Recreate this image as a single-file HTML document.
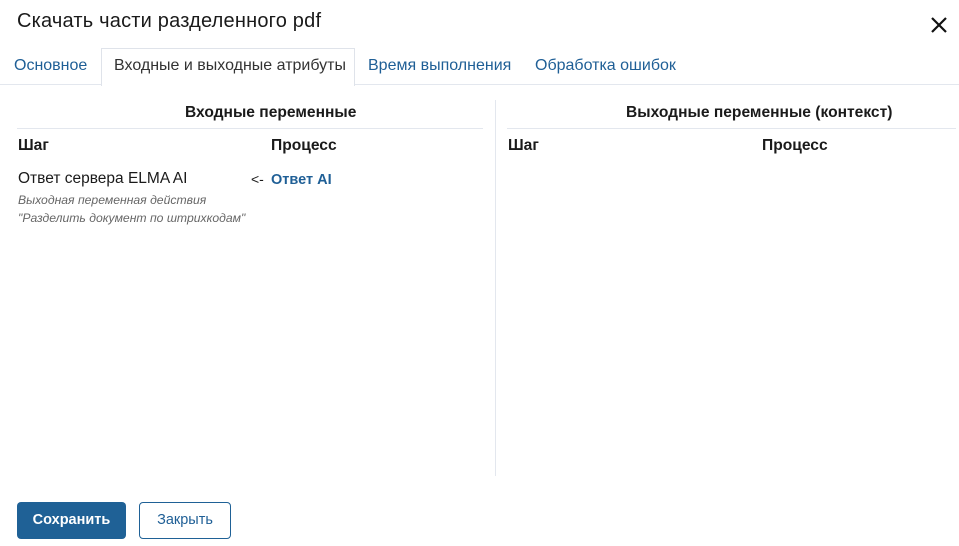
<!DOCTYPE html>
<html><head><meta charset="utf-8"><style>
*{margin:0;padding:0;box-sizing:border-box}
body{width:959px;height:546px;background:#fff;font-family:"Liberation Sans",sans-serif;color:#1a1a1a;position:relative;overflow:hidden}
.a{position:absolute;white-space:nowrap}
.title{left:17px;top:10px;font-size:20px;letter-spacing:0.2px}
.tab{top:57px;font-size:16px;color:#1f5f96}
.act{left:101px;top:48px;width:254px;height:38px;border:1px solid #dfe3ea;border-bottom:none;background:#fff}
.line{position:absolute;background:#e3e7ee}
.b{font-weight:bold;font-size:15.6px}
</style></head><body>
<div class="a title">Скачать части разделенного pdf</div>
<svg class="a" style="left:930px;top:16px" width="18" height="18" viewBox="0 0 18 18"><path d="M2 2L16 16M16 2L2 16" stroke="#111" stroke-width="2.2"/></svg>
<div class="line" style="left:0;top:84px;width:959px;height:1px"></div>
<div class="a act"></div>
<div class="a tab" style="left:14px">Основное</div>
<div class="a tab" style="left:114px;color:#333">Входные и выходные атрибуты</div>
<div class="a tab" style="left:368px">Время выполнения</div>
<div class="a tab" style="left:535px">Обработка ошибок</div>

<div class="a b" style="left:185px;top:104px">Входные переменные</div>
<div class="line" style="left:17px;top:128px;width:466px;height:1px"></div>
<div class="a b" style="left:18px;top:137px">Шаг</div>
<div class="a b" style="left:271px;top:137px">Процесс</div>
<div class="a" style="left:18px;top:170px;font-size:15.5px">Ответ сервера ELMA AI</div>
<div class="a" style="left:251px;top:171px;font-size:14px">&lt;-</div>
<div class="a" style="left:271px;top:172px;font-size:14.5px;font-weight:bold;color:#1f5f96">Ответ AI</div>
<div class="a" style="left:18px;top:193px;font-size:12.2px;font-style:italic;color:#666">Выходная переменная действия</div>
<div class="a" style="left:18px;top:211px;font-size:12.2px;font-style:italic;color:#666">"Разделить документ по штрихкодам"</div>

<div class="line" style="left:495px;top:100px;width:1px;height:376px"></div>
<div class="a b" style="left:626px;top:104px">Выходные переменные (контекст)</div>
<div class="line" style="left:507px;top:128px;width:449px;height:1px"></div>
<div class="a b" style="left:508px;top:137px">Шаг</div>
<div class="a b" style="left:762px;top:137px">Процесс</div>

<div class="a" style="left:17px;top:502px;width:109px;height:37px;background:#1f6196;border-radius:4px;color:#fff;font-weight:bold;font-size:14.5px;text-align:center;line-height:37px">Сохранить</div>
<div class="a" style="left:139px;top:502px;width:92px;height:37px;border:1px solid #1f6196;border-radius:4px;color:#1f5f96;font-size:14.5px;text-align:center;line-height:35px">Закрыть</div>
</body></html>
